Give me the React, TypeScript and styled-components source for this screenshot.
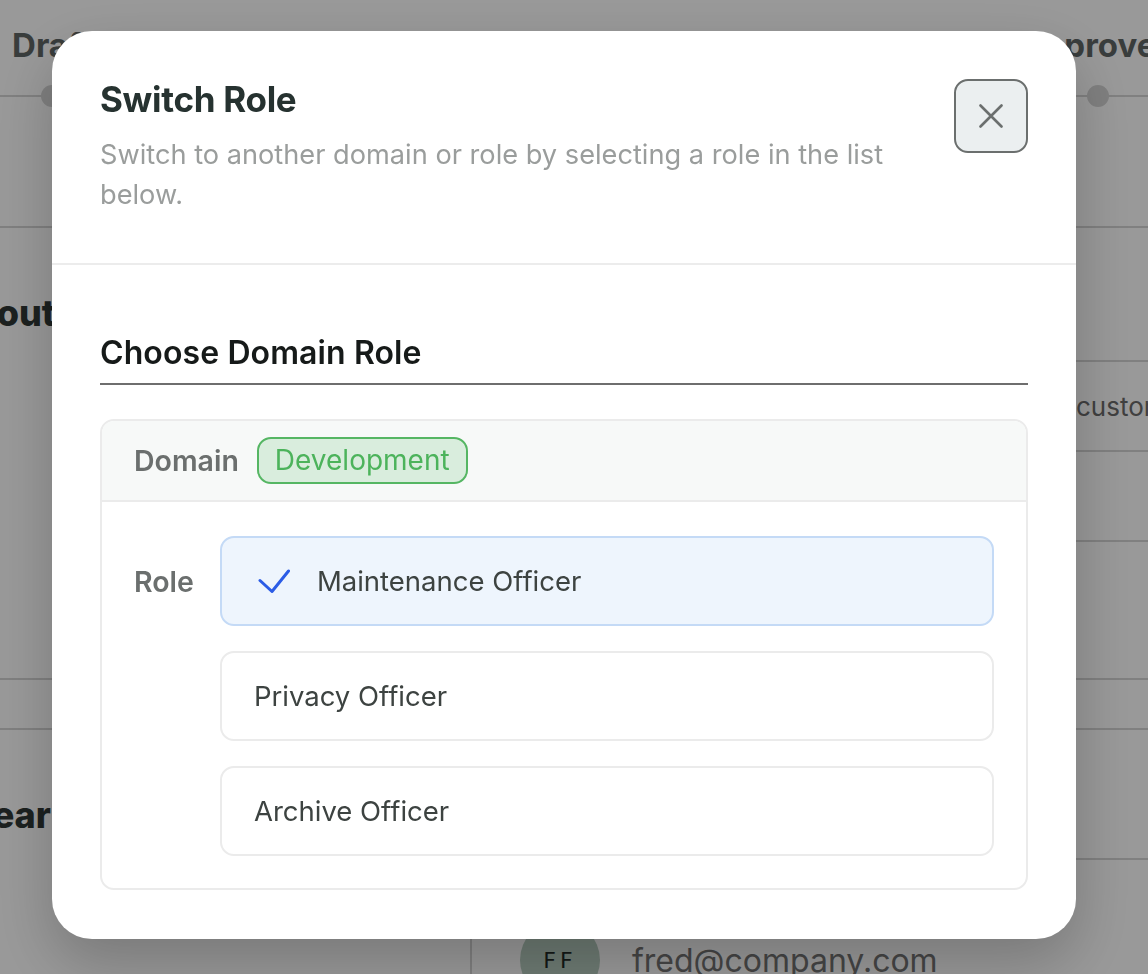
import React from "react";
import styled, { createGlobalStyle } from "styled-components";

const GlobalStyle = createGlobalStyle`
  html, body {
    margin: 0;
    padding: 0;
  }
  body {
    font-family: Inter, "Noto Sans", sans-serif;
    background: #ffffff;
    overflow: hidden;
  }
  * {
    box-sizing: border-box;
  }
`;

/* ---------- page behind the dialog ---------- */

const Page = styled.div`
  width: 1150px;
  height: 974px;
  overflow: hidden;
  background: #ffffff;
`;

const Stepper = styled.div`
  height: 228px;
  border-bottom: 2px solid #d5d5d5;
  position: relative;
  display: grid;
  grid-template-columns: 104px 1fr 104px;
  align-items: start;

  &::before {
    content: "";
    position: absolute;
    left: 0;
    right: 0;
    top: 95px;
    height: 2px;
    background: #d5d5d5;
  }
`;

const Step = styled.div`
  display: flex;
  flex-direction: column;
  align-items: center;
  gap: 20px;
  padding-top: 25px;
  white-space: nowrap;
  position: relative;
`;

const StepLabel = styled.span`
  font-size: 33px;
  line-height: 40px;
  font-weight: 700;
  color: #5f6665;
`;

const StepDot = styled.span`
  width: 22px;
  height: 22px;
  border-radius: 50%;
  background: #d5d5d5;
`;

const Section = styled.div<{ $height: number }>`
  height: ${(p) => p.$height}px;
  display: grid;
  grid-template-columns: 470px 1fr;
  border-bottom: 2px solid #d5d5d5;
`;

const SectionAside = styled.div<{ $top: number }>`
  padding-top: ${(p) => p.$top}px;
`;

const SectionHeading = styled.h2<{ $shift: number }>`
  margin: 0 0 0 ${(p) => -p.$shift}px;
  font-size: 36px;
  line-height: 44px;
  font-weight: 800;
  color: #2f3735;
  white-space: nowrap;
`;

const Rows = styled.div`
  display: flex;
  flex-direction: column;
`;

const Row = styled.div<{ $height: number; $divider?: boolean }>`
  height: ${(p) => p.$height}px;
  display: grid;
  grid-template-columns: 606px 1fr;
  align-items: center;
  border-bottom: ${(p) => (p.$divider ? "2px solid #d5d5d5" : "none")};
  font-size: 26px;
  color: #6b6b6b;
  white-space: nowrap;
`;

const Band = styled.div`
  height: 50px;
  border-bottom: 2px solid #d5d5d5;
`;

const Team = styled.div`
  display: grid;
  grid-template-columns: 470px 1fr;
  height: 244px;
`;

const TeamList = styled.div`
  display: flex;
  flex-direction: column;
`;

const TeamHead = styled.div`
  height: 130px;
  border-bottom: 2px solid #d5d5d5;
`;

const Member = styled.div`
  border-left: 2px solid #d5d5d5;
  margin-top: 10px;
  padding: 50px 0 0 48px;
  display: flex;
  align-items: center;
  gap: 32px;
`;

const Avatar = styled.span`
  width: 80px;
  height: 80px;
  border-radius: 50%;
  background: #b7cdc0;
  display: flex;
  align-items: center;
  justify-content: center;
  font-family: "DejaVu Sans", sans-serif;
  font-size: 22px;
  letter-spacing: 4px;
  color: #1f2a25;
`;

const MemberEmail = styled.span`
  font-size: 32px;
  color: #747474;
`;

/* ---------- dialog ---------- */

const Overlay = styled.div`
  position: fixed;
  inset: 0;
  z-index: 10;
  background: rgba(0, 0, 0, 0.4);
  display: flex;
  align-items: flex-start;
  padding: 31px 0 0 52px;
`;

const Dialog = styled.div`
  width: 1024px;
  background: #ffffff;
  border-radius: 40px;
  box-shadow: 0 24px 60px rgba(0, 0, 0, 0.22);
  overflow: hidden;
`;

const Header = styled.div`
  display: flex;
  align-items: flex-start;
  gap: 24px;
  padding: 48px;
  border-bottom: 2px solid #ececec;
`;

const HeaderText = styled.div`
  flex: 1;
`;

const Title = styled.h1`
  margin: 0;
  font-size: 35px;
  line-height: 40px;
  font-weight: 700;
  letter-spacing: -0.3px;
  color: #263230;
`;

const Subtitle = styled.p`
  margin: 16px 0 0;
  font-size: 27.2px;
  line-height: 40px;
  color: #9a9d9c;
`;

const CloseButton = styled.button`
  width: 74px;
  height: 74px;
  flex-shrink: 0;
  border: 2px solid #6b6f6e;
  border-radius: 14px;
  background: #ebeff0;
  display: flex;
  align-items: center;
  justify-content: center;
  padding: 0;
  cursor: pointer;
`;

const Body = styled.div`
  padding: 70px 48px 49px;
`;

const BodyTitle = styled.h3`
  margin: 0;
  padding-bottom: 12px;
  border-bottom: 2px solid #6e6e6e;
  font-size: 32px;
  line-height: 36px;
  font-weight: 600;
  letter-spacing: 0.1px;
  color: #161a19;
`;

const Card = styled.div`
  margin-top: 34px;
  border: 2px solid #ebebeb;
  border-radius: 14px;
  overflow: hidden;
`;

const CardHeader = styled.div`
  display: flex;
  align-items: center;
  gap: 18px;
  padding: 16px 32px;
  background: #f7f9f8;
  border-bottom: 2px solid #ebebeb;
`;

const FieldLabel = styled.span`
  font-size: 28.5px;
  font-weight: 600;
  color: #6b6f6e;
`;

const Badge = styled.span`
  padding: 6px 16px;
  border: 2px solid #55b663;
  border-radius: 14px;
  background: #d9eddd;
  color: #4cb35b;
  font-size: 28px;
  line-height: 31px;
`;

const CardBody = styled.div`
  display: grid;
  grid-template-columns: auto 1fr;
  column-gap: 26px;
  padding: 34px 32px 32px;
`;

const RoleLabel = styled(FieldLabel)`
  height: 90px;
  display: flex;
  align-items: center;
`;

const OptionList = styled.div`
  display: flex;
  flex-direction: column;
  gap: 25px;
`;

const Option = styled.div<{ $selected?: boolean }>`
  height: 90px;
  display: flex;
  align-items: center;
  gap: 27px;
  padding: 0 32px 0 ${(p) => (p.$selected ? 36 : 32)}px;
  border: 2px solid ${(p) => (p.$selected ? "#c4daf6" : "#ebebeb")};
  border-radius: 14px;
  background: ${(p) => (p.$selected ? "#eef5fd" : "#ffffff")};
  font-size: 27.5px;
  color: #3d4341;
  cursor: pointer;
`;

const CloseIcon = () => (
  <svg width="24" height="24" viewBox="0 0 24 24" fill="none">
    <path
      d="M1.5 1.5L22.5 22.5M22.5 1.5L1.5 22.5"
      stroke="#6b6f6e"
      strokeWidth="2.6"
      strokeLinecap="round"
    />
  </svg>
);

const CheckIcon = () => (
  <svg width="32" height="24" viewBox="0 0 32 24" fill="none">
    <path
      d="M2 11.5L14 22.5L30.5 2"
      stroke="#2b5ce6"
      strokeWidth="3"
      strokeLinecap="round"
      strokeLinejoin="round"
    />
  </svg>
);

const roles = ["Maintenance Officer", "Privacy Officer", "Archive Officer"];

const App = () => {
  const [selected, setSelected] = React.useState(roles[0]);

  return (
    <>
      <GlobalStyle />
      <Page>
        <Stepper>
          <Step>
            <StepLabel>Draft</StepLabel>
            <StepDot />
          </Step>
          <Step>
            <StepLabel>Review</StepLabel>
            <StepDot />
          </Step>
          <Step>
            <StepLabel>Approved</StepLabel>
            <StepDot />
          </Step>
        </Stepper>
        <Section $height={452}>
          <SectionAside $top={63}>
            <SectionHeading $shift={54}>About</SectionHeading>
          </SectionAside>
          <Rows>
            <Row $height={134} $divider />
            <Row $height={90} $divider>
              <span>Purpose</span>
              <span>customer data</span>
            </Row>
            <Row $height={90} $divider />
            <Row $height={138} />
          </Rows>
        </Section>
        <Band />
        <Team>
          <SectionAside $top={63}>
            <SectionHeading $shift={30}>Year</SectionHeading>
          </SectionAside>
          <TeamList>
            <TeamHead />
            <Member>
              <Avatar>FF</Avatar>
              <MemberEmail>fred@company.com</MemberEmail>
            </Member>
          </TeamList>
        </Team>
      </Page>

      <Overlay>
        <Dialog role="dialog" aria-labelledby="switch-role-title">
          <Header>
            <HeaderText>
              <Title id="switch-role-title">Switch Role</Title>
              <Subtitle>
                Switch to another domain or role by selecting a role in the list
                below.
              </Subtitle>
            </HeaderText>
            <CloseButton aria-label="Close">
              <CloseIcon />
            </CloseButton>
          </Header>
          <Body>
            <BodyTitle>Choose Domain Role</BodyTitle>
            <Card>
              <CardHeader>
                <FieldLabel>Domain</FieldLabel>
                <Badge>Development</Badge>
              </CardHeader>
              <CardBody>
                <RoleLabel>Role</RoleLabel>
                <OptionList>
                  {roles.map((role) => (
                    <Option
                      key={role}
                      $selected={role === selected}
                      onClick={() => setSelected(role)}
                    >
                      {role === selected && <CheckIcon />}
                      {role}
                    </Option>
                  ))}
                </OptionList>
              </CardBody>
            </Card>
          </Body>
        </Dialog>
      </Overlay>
    </>
  );
};

export default App;
